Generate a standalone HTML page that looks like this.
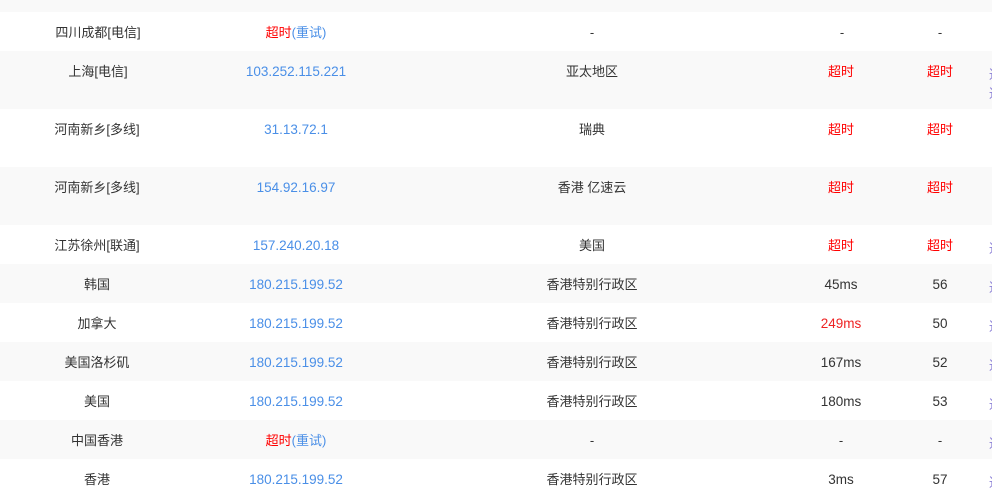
<!DOCTYPE html>
<html><head><meta charset="utf-8"><style>
body{margin:0;width:992px;height:494px;overflow:hidden;background:#fff;font-family:"Liberation Sans","Noto Sans CJK SC",sans-serif;font-size:13px;color:#333;position:relative}
.r{position:absolute;left:0;width:992px}
.g{background:#f9f9f9}
.c{position:absolute;top:13px;line-height:16px;text-align:center;white-space:nowrap;transform:translateX(-50%)}
.b{color:#4a8fe7}.red{color:#f00}
.n{font-size:13.5px}
.e{position:absolute;left:989px;top:13px;color:#8a7fd6;font-size:13px;white-space:nowrap}
</style></head><body>
<div class="r g" style="top:0;height:12px"></div>
<div class="r" style="top:12px;height:39px"><span class="c" style="left:98px">四川成都[电信]</span><span class="c" style="left:296px"><span class="red">超时</span><span class="b">(重试)</span></span><span class="c" style="left:592px">-</span><span class="c" style="left:842px">-</span><span class="c" style="left:940px">-</span></div>
<div class="r g" style="top:51px;height:58px"><span class="c" style="left:98px">上海[电信]</span><span class="c b n" style="left:296px">103.252.115.221</span><span class="c" style="left:592px">亚太地区</span><span class="c red" style="left:841px">超时</span><span class="c red" style="left:940px">超时</span><span class="e">通<br>通</span></div>
<div class="r" style="top:109px;height:58px"><span class="c" style="left:97px">河南新乡[多线]</span><span class="c b n" style="left:296px">31.13.72.1</span><span class="c" style="left:592px">瑞典</span><span class="c red" style="left:841px">超时</span><span class="c red" style="left:940px">超时</span></div>
<div class="r g" style="top:167px;height:58px"><span class="c" style="left:97px">河南新乡[多线]</span><span class="c b n" style="left:296px">154.92.16.97</span><span class="c" style="left:592px">香港 亿速云</span><span class="c red" style="left:841px">超时</span><span class="c red" style="left:940px">超时</span></div>
<div class="r" style="top:225px;height:39px"><span class="c" style="left:97px">江苏徐州[联通]</span><span class="c b n" style="left:296px">157.240.20.18</span><span class="c" style="left:592px">美国</span><span class="c red" style="left:841px">超时</span><span class="c red" style="left:940px">超时</span><span class="e">通</span></div>
<div class="r g" style="top:264px;height:39px"><span class="c" style="left:97px">韩国</span><span class="c b n" style="left:296px">180.215.199.52</span><span class="c" style="left:592px">香港特别行政区</span><span class="c n" style="left:841px">45ms</span><span class="c n" style="left:940px">56</span><span class="e">通</span></div>
<div class="r" style="top:303px;height:39px"><span class="c" style="left:97px">加拿大</span><span class="c b n" style="left:296px">180.215.199.52</span><span class="c" style="left:592px">香港特别行政区</span><span class="c n" style="left:841px;color:#e22">249ms</span><span class="c n" style="left:940px">50</span><span class="e">通</span></div>
<div class="r g" style="top:342px;height:39px"><span class="c" style="left:97px">美国洛杉矶</span><span class="c b n" style="left:296px">180.215.199.52</span><span class="c" style="left:592px">香港特别行政区</span><span class="c n" style="left:841px">167ms</span><span class="c n" style="left:940px">52</span><span class="e">通</span></div>
<div class="r" style="top:381px;height:39px"><span class="c" style="left:97px">美国</span><span class="c b n" style="left:296px">180.215.199.52</span><span class="c" style="left:592px">香港特别行政区</span><span class="c n" style="left:841px">180ms</span><span class="c n" style="left:940px">53</span><span class="e">通</span></div>
<div class="r g" style="top:420px;height:39px"><span class="c" style="left:97px">中国香港</span><span class="c" style="left:296px"><span class="red">超时</span><span class="b">(重试)</span></span><span class="c" style="left:592px">-</span><span class="c" style="left:841px">-</span><span class="c" style="left:940px">-</span><span class="e">通</span></div>
<div class="r" style="top:459px;height:35px"><span class="c" style="left:97px">香港</span><span class="c b n" style="left:296px">180.215.199.52</span><span class="c" style="left:592px">香港特别行政区</span><span class="c n" style="left:841px">3ms</span><span class="c n" style="left:940px">57</span><span class="e">通</span></div>
</body></html>
